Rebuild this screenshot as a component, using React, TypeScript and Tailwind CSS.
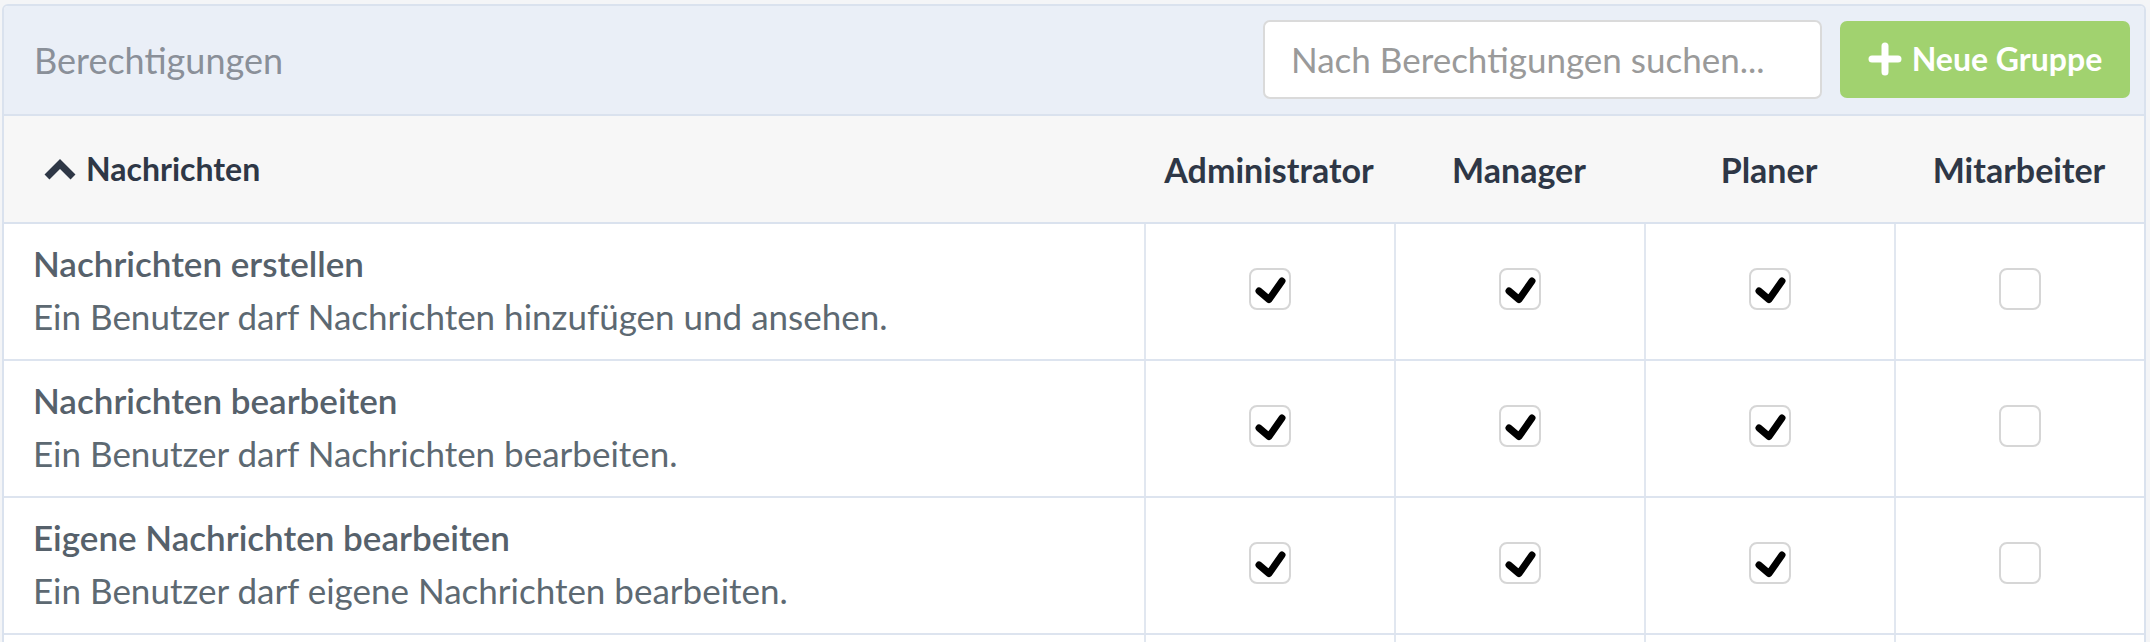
import React, { useState } from 'react';

const groups = ['Administrator', 'Manager', 'Planer', 'Mitarbeiter'];

const permissions = [
  {
    id: 'create',
    title: 'Nachrichten erstellen',
    description: 'Ein Benutzer darf Nachrichten hinzufügen und ansehen.',
    values: [true, true, true, false],
  },
  {
    id: 'edit',
    title: 'Nachrichten bearbeiten',
    description: 'Ein Benutzer darf Nachrichten bearbeiten.',
    values: [true, true, true, false],
  },
  {
    id: 'edit-own',
    title: 'Eigene Nachrichten bearbeiten',
    description: 'Ein Benutzer darf eigene Nachrichten bearbeiten.',
    values: [true, true, true, false],
  },
  {
    id: 'delete',
    title: 'Nachrichten löschen',
    description: 'Ein Benutzer darf Nachrichten löschen.',
    values: [true, true, false, false],
  },
];

function CheckBox({ checked, onChange }: { checked: boolean; onChange: () => void }) {
  return (
    <button
      onClick={onChange}
      className="mb-[5px] flex h-[42px] w-[42px] items-center justify-center rounded-[8px] border-2 border-[#d6d6d6] bg-white"
    >
      {checked && (
        <svg width="42" height="42" viewBox="0 0 42 42" className="shrink-0">
          <path
            d="M10 23 L20 31.5 L33 13"
            fill="none"
            stroke="#000"
            strokeWidth="7"
            strokeLinecap="round"
            strokeLinejoin="round"
          />
        </svg>
      )}
    </button>
  );
}

export default function App() {
  const [rows, setRows] = useState(permissions);
  const [query, setQuery] = useState('');

  const toggle = (rowId: string, idx: number) => {
    setRows((prev) =>
      prev.map((r) =>
        r.id === rowId ? { ...r, values: r.values.map((v, i) => (i === idx ? !v : v)) } : r
      )
    );
  };

  return (
    <div className="min-h-screen bg-[#f4f5f7] pl-[2px] pr-[4px] pt-[4px] font-['Lato','Noto_Sans',sans-serif]">
      <div className="overflow-hidden rounded-[6px] border-2 border-[#dae2ee] bg-white">
        {/* Kopfzeile */}
        <div className="flex h-[110px] items-center justify-between border-b-2 border-[#dae2ee] bg-[#eaeff7] pl-[30px] pr-[14px]">
          <div className="text-[36px] text-[#8a9099]">Berechtigungen</div>
          <div className="flex items-center gap-[18px] pb-[2px]">
            <input
              value={query}
              onChange={(e) => setQuery(e.target.value)}
              placeholder="Nach Berechtigungen suchen..."
              className="h-[79px] w-[559px] rounded-[7px] border-2 border-[#dadada] bg-white px-[26px] text-[35px] text-[#444] outline-none placeholder:text-[#9a9a9a]"
            />
            <button className="flex h-[77px] w-[290px] items-center justify-center gap-[10px] rounded-[7px] bg-[#a1d26f] text-[32px] font-bold text-white">
              <svg width="34" height="34" viewBox="0 0 34 34">
                <path d="M17 4 V30 M4 17 H30" stroke="#fff" strokeWidth="7" strokeLinecap="round" />
              </svg>
              Neue Gruppe
            </button>
          </div>
        </div>

        {/* Spaltenköpfe */}
        <div className="flex h-[108px] items-center border-b-2 border-[#dae2ee] bg-[#f7f7f7]">
          <div className="flex flex-1 items-center gap-[10px] pl-[40px] text-[32px] font-bold text-[#2e3746]">
            <svg width="32" height="22" viewBox="0 0 32 22">
              <path d="M3 19 L16 6 L29 19" fill="none" stroke="#2e3746" strokeWidth="7" strokeLinejoin="miter" />
            </svg>
            Nachrichten
          </div>
          {groups.map((g) => (
            <div key={g} className="w-[250px] text-center text-[34px] font-bold text-[#2e3746]">
              {g}
            </div>
          ))}
        </div>

        {/* Zeilen */}
        {rows.map((r) => (
          <div key={r.id} className="flex h-[137px] border-b-2 border-[#dde4ef]">
            <div className="flex flex-1 flex-col justify-center pl-[29px] pb-[3px]">
              <div className="text-[35px] font-semibold leading-[53px] text-[#56616b]">{r.title}</div>
              <div className="text-[35px] leading-[53px] text-[#5d6972]">{r.description}</div>
            </div>
            {r.values.map((v, i) => (
              <div
                key={i}
                className="flex w-[250px] items-center justify-center border-l-2 border-[#e1e7f0]"
              >
                <CheckBox checked={v} onChange={() => toggle(r.id, i)} />
              </div>
            ))}
          </div>
        ))}
      </div>
    </div>
  );
}
